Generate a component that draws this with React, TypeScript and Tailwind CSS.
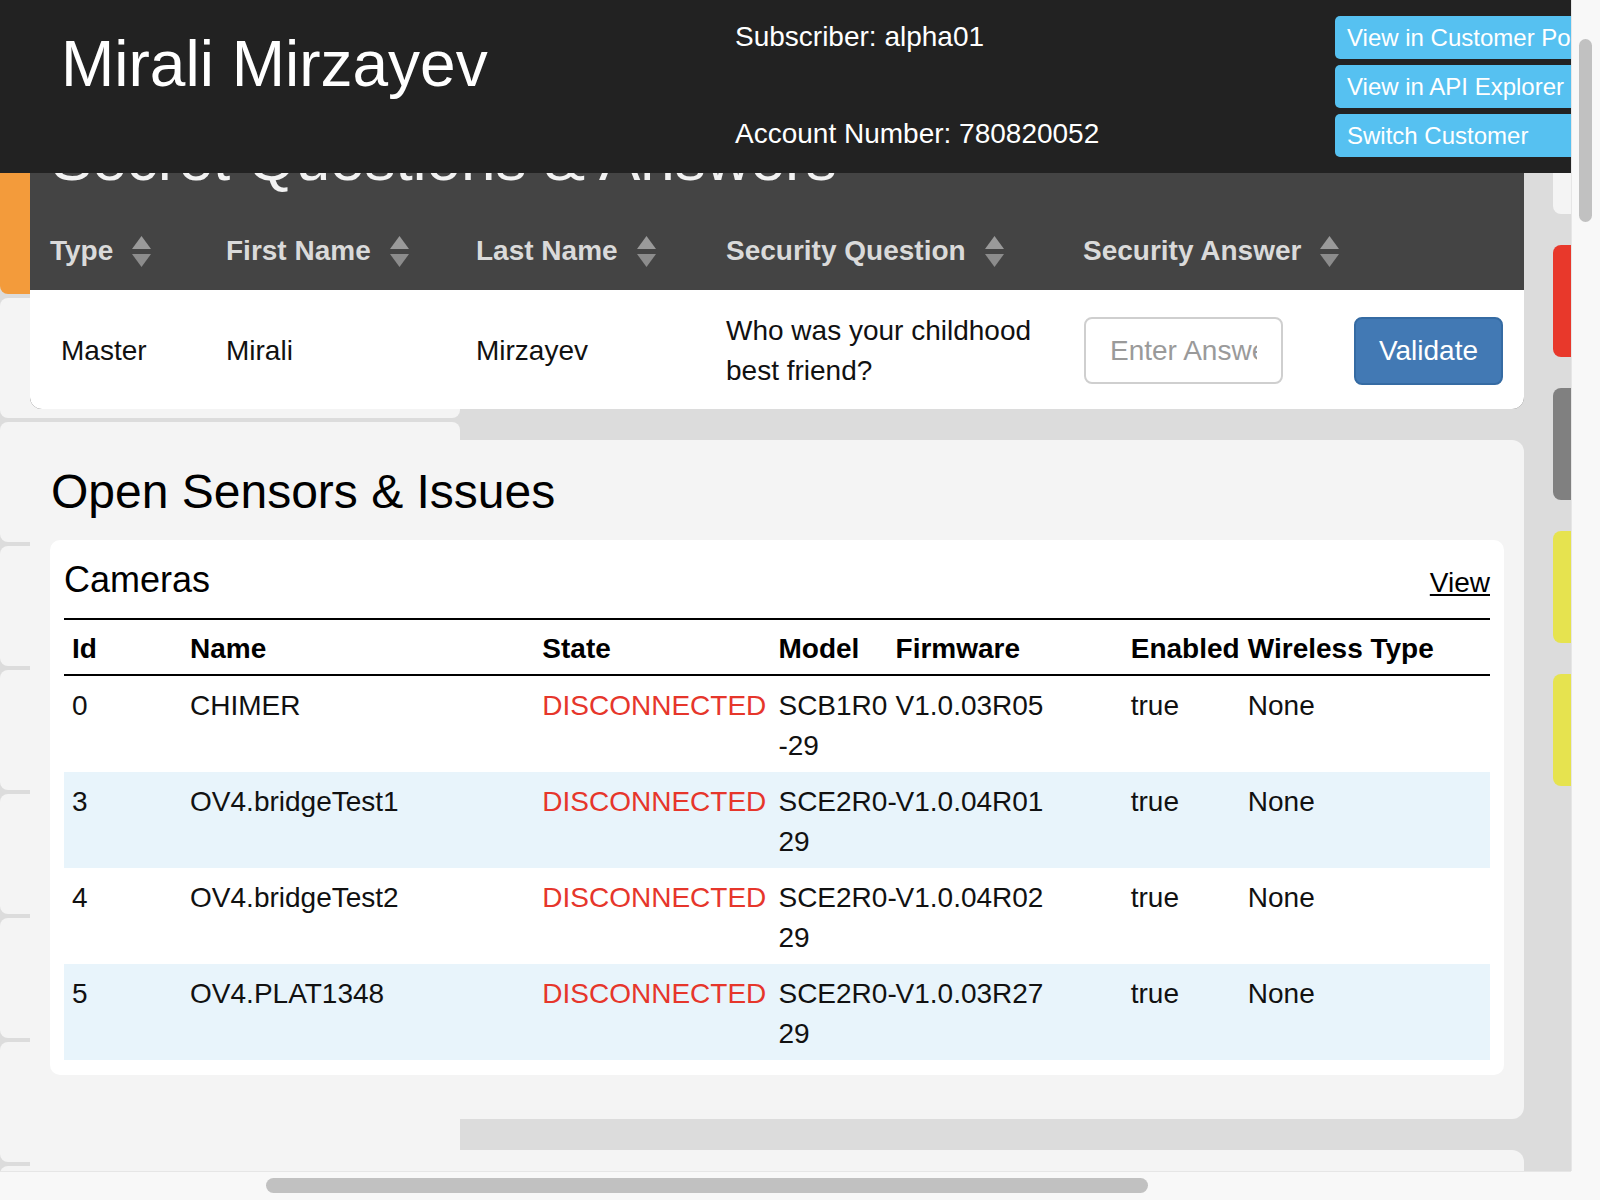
import React from 'react';

const SortIcon = () => (
  <svg width="19" height="31" viewBox="0 0 19 31" className="ml-[19px] shrink-0">
    <polygon points="0,13 9.5,0 19,13" fill="#9a9a9a" />
    <polygon points="0,18 19,18 9.5,31" fill="#8c8c8c" />
  </svg>
);

const cameras = [
  { id: '0', name: 'CHIMER', model: ['SCB1R0', '-29'], firmware: 'V1.0.03R05' },
  { id: '3', name: 'OV4.bridgeTest1', model: ['SCE2R0-', '29'], firmware: 'V1.0.04R01' },
  { id: '4', name: 'OV4.bridgeTest2', model: ['SCE2R0-', '29'], firmware: 'V1.0.04R02' },
  { id: '5', name: 'OV4.PLAT1348', model: ['SCE2R0-', '29'], firmware: 'V1.0.03R27' },
];

const Header = () => (
  <div className="absolute top-0 left-0 right-0 z-20 h-[173px] bg-[#222] flex overflow-hidden text-white">
    <div className="w-[735px] shrink-0 pl-[61px] pt-[32px] text-[64px] leading-[64px] whitespace-nowrap">
      Mirali Mirzayev
    </div>
    <div className="w-[600px] shrink-0 pt-[17px] text-[28px] leading-[40px] flex flex-col">
      <div>Subscriber: alpha01</div>
      <div className="mt-[57px]">Account Number: 780820052</div>
    </div>
    <div className="w-[282px] shrink-0 pt-[16px] flex flex-col gap-[6px]">
      {['View in Customer Portal', 'View in API Explorer', 'Switch Customer'].map((t) => (
        <div
          key={t}
          className="h-[43px] rounded-[5px] bg-[#56c1f1] pl-[12px] text-[24px] leading-[43px] whitespace-nowrap"
        >
          {t}
        </div>
      ))}
    </div>
  </div>
);

const SecretQuestions = () => (
  <div className="bg-[#444] rounded-[12px] overflow-hidden">
    <div className="h-[110px] pt-[28px] pl-[21px] text-[62px] leading-[62px] text-[#f2f2f2] whitespace-nowrap">
      Secret Questions &amp; Answers
    </div>
    <div className="h-[80px] pt-[2px] grid grid-cols-[196px_250px_250px_357px_271px_170px] items-center text-[28px] leading-[40px] font-bold text-[#dadada]">
      <div className="pl-[20px] flex items-center">Type<SortIcon /></div>
      <div className="flex items-center">First Name<SortIcon /></div>
      <div className="flex items-center">Last Name<SortIcon /></div>
      <div className="flex items-center">Security Question<SortIcon /></div>
      <div className="flex items-center">Security Answer<SortIcon /></div>
      <div />
    </div>
    <div className="h-[119px] pt-[2px] bg-white grid grid-cols-[196px_250px_250px_357px_271px_170px] items-center text-[28px] leading-[40px] text-[#111]">
      <div className="pl-[31px]">Master</div>
      <div>Mirali</div>
      <div>Mirzayev</div>
      <div>
        Who was your childhood
        <br />
        best friend?
      </div>
      <div className="pl-[1px]">
        <input
          placeholder="Enter Answer"
          className="w-[199px] h-[67px] border-2 border-[#cfcfcf] rounded-[8px] px-[24px] text-[28px] placeholder:text-[#9a9a9a] outline-none"
        />
      </div>
      <div>
        <button className="w-[149px] h-[68px] rounded-[8px] bg-[#4279b4] border-2 border-[#356ba3] text-white text-[28px]">
          Validate
        </button>
      </div>
    </div>
  </div>
);

const OpenSensors = () => (
  <div className="mt-[31px] bg-[#f4f4f4] rounded-[12px] px-[20px] pt-[26px] pb-[44px]">
    <div className="pl-[1px] text-[48px] leading-[52px] text-black">Open Sensors &amp; Issues</div>
    <div className="mt-[22px] bg-white rounded-[10px] px-[14px] pt-[20px] pb-[15px]">
      <div className="h-[40px] flex items-baseline justify-between">
        <span className="text-[36px] leading-[40px] text-black">Cameras</span>
        <span className="text-[28px] leading-[40px] text-black underline">View</span>
      </div>
      <table className="mt-[18px] w-full table-fixed border-collapse border-t-2 border-black text-[28px] leading-[40px] text-[#111]">
        <colgroup>
          <col className="w-[118px]" />
          <col className="w-[352px]" />
          <col className="w-[236px]" />
          <col className="w-[117px]" />
          <col className="w-[235px]" />
          <col className="w-[117px]" />
          <col className="w-[250px]" />
        </colgroup>
        <thead>
          <tr className="border-b-2 border-black text-black">
            {['Id', 'Name', 'State', 'Model', 'Firmware', 'Enabled', 'Wireless Type'].map((h) => (
              <th key={h} className="px-[8px] pt-[9px] pb-[5px] text-left font-bold whitespace-nowrap">
                {h}
              </th>
            ))}
          </tr>
        </thead>
        <tbody>
          {cameras.map((c, i) => (
            <tr key={c.id} className={i % 2 === 1 ? 'bg-[#e8f4fb]' : ''}>
              <td className="px-[8px] pt-[10px] pb-[6px] align-top">{c.id}</td>
              <td className="px-[8px] pt-[10px] pb-[6px] align-top whitespace-nowrap">{c.name}</td>
              <td className="px-[8px] pt-[10px] pb-[6px] align-top whitespace-nowrap text-[#e6362b]">DISCONNECTED</td>
              <td className="px-[8px] pt-[10px] pb-[6px] align-top whitespace-nowrap">
                {c.model[0]}
                <br />
                {c.model[1]}
              </td>
              <td className="px-[8px] pt-[10px] pb-[6px] align-top whitespace-nowrap">{c.firmware}</td>
              <td className="px-[8px] pt-[10px] pb-[6px] align-top">true</td>
              <td className="px-[8px] pt-[10px] pb-[6px] align-top">None</td>
            </tr>
          ))}
        </tbody>
      </table>
    </div>
  </div>
);

export default function App() {
  return (
    <div className="w-[1600px] h-[1200px] overflow-hidden bg-[#f8f8f8] font-['Liberation_Sans',Arial,sans-serif] grid grid-cols-[1571px_29px] grid-rows-[1171px_29px]">
      <div className="relative overflow-hidden bg-[#dcdcdc]">
        <Header />
        <div className="flex items-start pt-[100px]">
          {/* left column of cards, mostly under the main panels */}
          <div className="w-[460px] shrink-0 flex flex-col gap-[4px]">
            <div className="h-[194px] rounded-[8px] bg-[#f39b3b]" />
            {Array.from({ length: 8 }).map((_, i) => (
              <div key={i} className="h-[120px] rounded-[8px] bg-[#f4f4f4]" />
            ))}
          </div>

          <div className="relative z-10 ml-[-430px] w-[1494px] shrink-0">
            <SecretQuestions />
            <OpenSensors />
            <div className="mt-[31px] h-[100px] rounded-t-[12px] bg-[#f4f4f4]" />
          </div>

          {/* right column of status cards, clipped by the viewport */}
          <div className="ml-[29px] w-[200px] shrink-0 flex flex-col gap-[31px]">
            <div className="h-[114px] rounded-[8px] bg-[#f4f4f4]" />
            <div className="h-[112px] rounded-[8px] bg-[#e8382b]" />
            <div className="h-[112px] rounded-[8px] bg-[#808080]" />
            <div className="h-[112px] rounded-[8px] bg-[#e6e34f]" />
            <div className="h-[112px] rounded-[8px] bg-[#e6e34f]" />
          </div>
        </div>
      </div>

      {/* vertical scrollbar */}
      <div className="border-l border-[#e6e6e6] bg-[#f8f8f8]">
        <div className="mt-[39px] ml-[7px] w-[13px] h-[183px] rounded-full bg-[#c1c1c1]" />
      </div>

      {/* horizontal scrollbar */}
      <div className="border-t border-[#e6e6e6] bg-[#f8f8f8]">
        <div className="mt-[6px] ml-[266px] w-[882px] h-[15px] rounded-full bg-[#c1c1c1]" />
      </div>
      <div className="bg-[#f8f8f8]" />
    </div>
  );
}
